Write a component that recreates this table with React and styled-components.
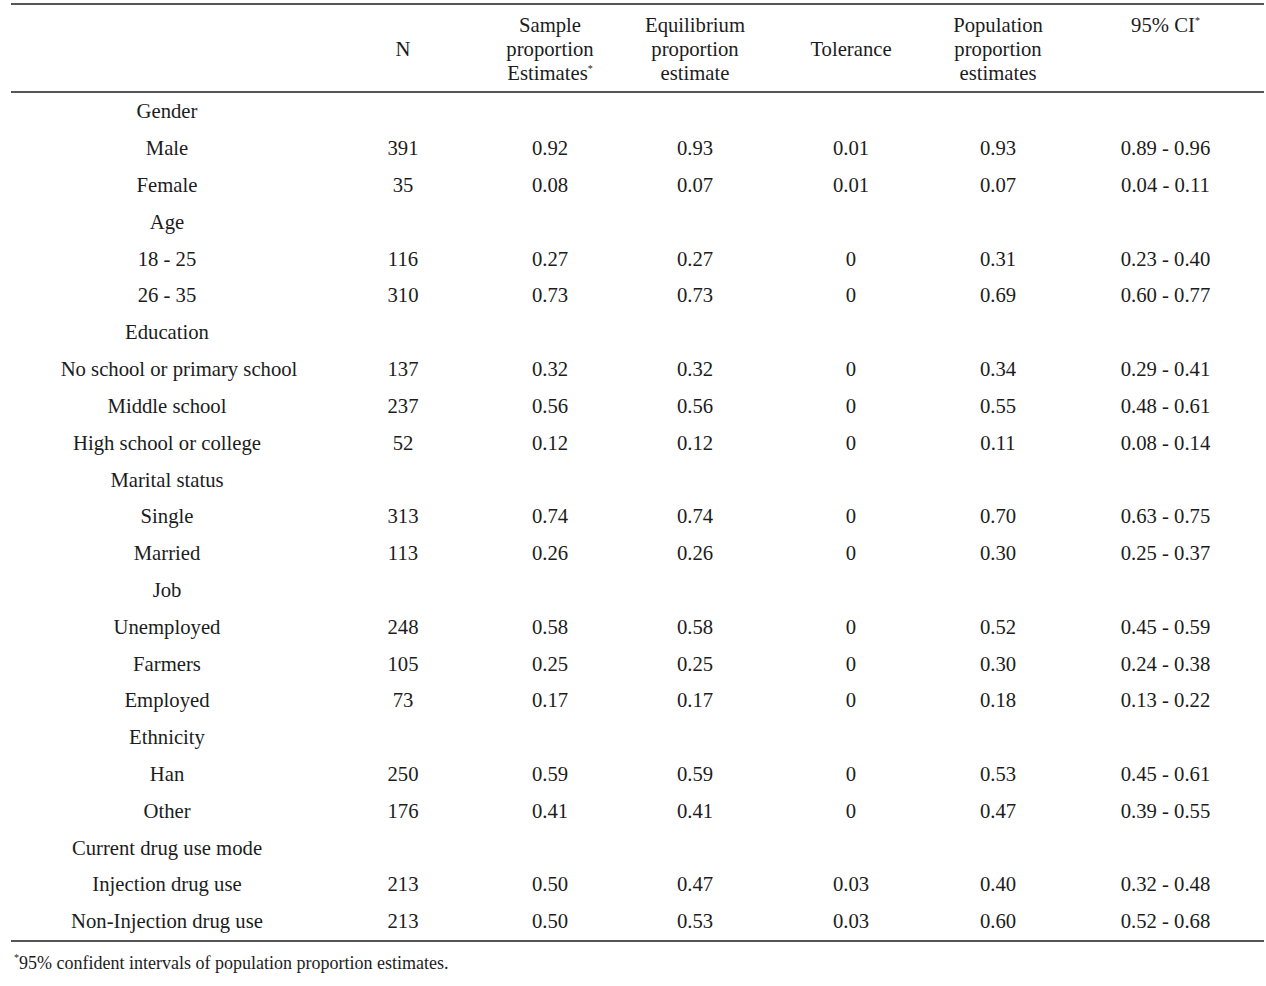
import React from "react";
import styled, { createGlobalStyle } from "styled-components";

const GlobalStyle = createGlobalStyle`
  html, body {
    margin: 0;
    padding: 0;
    background: #ffffff;
  }
  body {
    font-family: "Liberation Serif", "Times New Roman", serif;
    color: #1c1c1c;
  }
`;

const columns = [312, 160, 134, 156, 156, 138, 197];

const groups = [
  {
    title: "Gender",
    rows: [
      ["Male", "391", "0.92", "0.93", "0.01", "0.93", "0.89 - 0.96"],
      ["Female", "35", "0.08", "0.07", "0.01", "0.07", "0.04 - 0.11"],
    ],
  },
  {
    title: "Age",
    rows: [
      ["18 - 25", "116", "0.27", "0.27", "0", "0.31", "0.23 - 0.40"],
      ["26 - 35", "310", "0.73", "0.73", "0", "0.69", "0.60 - 0.77"],
    ],
  },
  {
    title: "Education",
    rows: [
      ["No school or primary school", "137", "0.32", "0.32", "0", "0.34", "0.29 - 0.41"],
      ["Middle school", "237", "0.56", "0.56", "0", "0.55", "0.48 - 0.61"],
      ["High school or college", "52", "0.12", "0.12", "0", "0.11", "0.08 - 0.14"],
    ],
  },
  {
    title: "Marital status",
    rows: [
      ["Single", "313", "0.74", "0.74", "0", "0.70", "0.63 - 0.75"],
      ["Married", "113", "0.26", "0.26", "0", "0.30", "0.25 - 0.37"],
    ],
  },
  {
    title: "Job",
    rows: [
      ["Unemployed", "248", "0.58", "0.58", "0", "0.52", "0.45 - 0.59"],
      ["Farmers", "105", "0.25", "0.25", "0", "0.30", "0.24 - 0.38"],
      ["Employed", "73", "0.17", "0.17", "0", "0.18", "0.13 - 0.22"],
    ],
  },
  {
    title: "Ethnicity",
    rows: [
      ["Han", "250", "0.59", "0.59", "0", "0.53", "0.45 - 0.61"],
      ["Other", "176", "0.41", "0.41", "0", "0.47", "0.39 - 0.55"],
    ],
  },
  {
    title: "Current drug use mode",
    rows: [
      ["Injection drug use", "213", "0.50", "0.47", "0.03", "0.40", "0.32 - 0.48"],
      ["Non-Injection drug use", "213", "0.50", "0.53", "0.03", "0.60", "0.52 - 0.68"],
    ],
  },
];

// the source table pushes this one label a little to the right
const shifted = { "No school or primary school": 24 };

const App = () => {
  return (
    <Page>
      <GlobalStyle />
      <Table>
        <colgroup>
          {columns.map((w, i) => (
            <col key={i} style={{ width: w }} />
          ))}
        </colgroup>
        <thead>
          <tr>
            <HeadCell />
            <HeadCell>N</HeadCell>
            <HeadCell>
              Sample
              <br />
              proportion
              <br />
              Estimates<Sup>*</Sup>
            </HeadCell>
            <HeadCell>
              Equilibrium
              <br />
              proportion
              <br />
              estimate
            </HeadCell>
            <HeadCell>Tolerance</HeadCell>
            <HeadCell>
              Population
              <br />
              proportion
              <br />
              estimates
            </HeadCell>
            <HeadCell $align="top">
              95% CI<Sup>*</Sup>
            </HeadCell>
          </tr>
        </thead>
        <tbody>
          {groups.map((g) => (
            <React.Fragment key={g.title}>
              <tr>
                <Cell>{g.title}</Cell>
                <Cell colSpan={6} />
              </tr>
              {g.rows.map((r) => (
                <tr key={r[0]}>
                  {r.map((v, i) => (
                    <Cell key={i} $indent={i === 0 ? shifted[v] : 0}>
                      {v}
                    </Cell>
                  ))}
                </tr>
              ))}
            </React.Fragment>
          ))}
        </tbody>
      </Table>
      <Footnote>
        <Sup>*</Sup>95% confident intervals of population proportion estimates.
      </Footnote>
    </Page>
  );
};

export default App;

const Page = styled.main`
  width: 1266px;
  padding: 3px 2px 0 11px;
  box-sizing: border-box;
`;

const Table = styled.table`
  width: 1253px;
  table-layout: fixed;
  border-collapse: collapse;
  border-top: 2px solid #555555;
  border-bottom: 2px solid #555555;
  font-size: 20.7px;
`;

const HeadCell = styled.th`
  font-weight: normal;
  text-align: center;
  vertical-align: ${({ $align }) => $align || "middle"};
  line-height: 24px;
  padding: 8px 0 6px;
  border-bottom: 2px solid #555555;
  white-space: nowrap;
`;

const Cell = styled.td`
  height: 36.82px;
  padding: 0 0 0 ${({ $indent }) => $indent || 0}px;
  text-align: center;
  vertical-align: middle;
  line-height: 24px;
  white-space: nowrap;
`;

const Sup = styled.sup`
  font-size: 10px;
  line-height: 0;
  vertical-align: 0;
  position: relative;
  top: -0.8em;
`;

const Footnote = styled.p`
  margin: 11px 0 0 3px;
  font-size: 18px;
  line-height: 21px;
`;
